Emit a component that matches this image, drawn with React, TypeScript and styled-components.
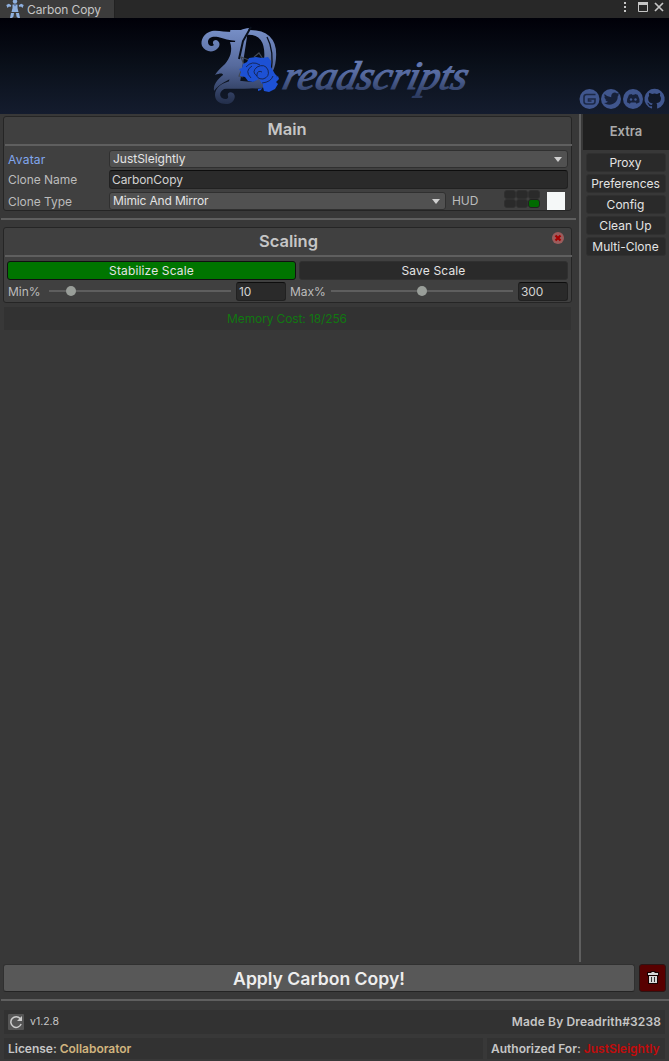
import React from "react";
import styled, { createGlobalStyle } from "styled-components";

const GlobalStyle = createGlobalStyle`
  * { box-sizing: border-box; }
  body {
    margin: 0;
    background: #383838;
    color: #c6c6c6;
    font-family: Inter, "Liberation Sans", sans-serif;
    font-size: 12px;
    line-height: 18px;
    overflow: hidden;
  }
`;

const Window = styled.div`
  width: 669px;
  height: 1061px;
  display: flex;
  flex-direction: column;
  background: #383838;
`;

const TabBar = styled.header`
  height: 18px;
  flex: none;
  display: flex;
  justify-content: space-between;
  background: #282828;
`;

const Tab = styled.div`
  width: 115px;
  height: 18px;
  display: flex;
  gap: 3px;
  padding-left: 6px;
  background: #3c3c3c;
  border-right: 1px solid #222;
  letter-spacing: -0.1px;
  line-height: 20px;
  white-space: nowrap;
`;

const WindowControls = styled.svg`
  width: 54px;
  height: 18px;
`;

const Banner = styled.div`
  height: 96px;
  flex: none;
  background: linear-gradient(#000008, #0a101a 50%, #141c2e);
`;

const Body = styled.div`
  height: 848px;
  flex: none;
  display: flex;
`;

const MainColumn = styled.main`
  width: 579px;
  display: flex;
  flex-direction: column;
`;

const Sidebar = styled.aside`
  flex: 1;
  border-left: 2px solid #5f5f5f;
  padding-left: 2px;
`;

const SidebarTitle = styled.div`
  height: 36px;
  background: #1f1f1f;
  color: #aaa;
  font-size: 13px;
  font-weight: 600;
  line-height: 35px;
  text-align: center;
`;

const SidebarList = styled.div`
  display: flex;
  flex-direction: column;
  gap: 2px;
  padding: 3px 3px 0;
`;

const Button = styled.button<{ $on?: boolean }>`
  height: 19px;
  flex: 1;
  padding: 0;
  border: 1px solid ${(p) => (p.$on ? "#111" : "#303030")};
  border-radius: 3px;
  background: ${(p) => (p.$on ? "#007500" : "#2a2a2a")};
  color: #e4e4e4;
  font: 12px/17px Inter, sans-serif;
  letter-spacing: 0.15px;
  text-align: center;
`;

const StabilizeButton = styled(Button)`
  flex: none;
  width: 289px;
  letter-spacing: 0.15px;
`;

const SideButton = styled(Button)`
  flex: none;
  padding-right: 1px;
  letter-spacing: 0;
  line-height: 18px;
  white-space: nowrap;
`;

const Panel = styled.section<{ $height: number; $top?: number }>`
  width: 569px;
  height: ${(p) => p.$height}px;
  margin: ${(p) => p.$top ?? 2}px 0 0 3px;
  border: 1px solid #252525;
  border-radius: 3px;
  background: #404040;
`;

const PanelTitle = styled.h2<{ $line?: number; $inset?: number }>`
  position: relative;
  height: 29px;
  margin: 0 -1px 0 1px;
  padding-right: ${(p) => p.$inset ?? 3}px;
  border-bottom: 2px solid #5f5f5f;
  font-size: 16.5px;
  font-weight: 600;
  line-height: ${(p) => p.$line ?? 25}px;
  text-align: center;
`;

const CloseBadge = styled.svg`
  position: absolute;
  right: 8px;
  top: 4px;
  width: 12px;
  height: 12px;
`;

const Row = styled.div<{ $top: number; $gap?: number; $left?: number }>`
  height: 18px;
  margin-top: ${(p) => p.$top}px;
  padding: 0 3px 0 ${(p) => p.$left ?? 4}px;
  display: flex;
  gap: ${(p) => p.$gap ?? 0}px;
  align-items: flex-start;
`;

const Label = styled.label<{ $w: number; $active?: boolean; $drop?: number; $indent?: number }>`
  width: ${(p) => p.$w}px;
  flex: none;
  padding-top: ${(p) => p.$drop ?? 1}px;
  padding-left: ${(p) => p.$indent ?? 0}px;
  color: ${(p) => (p.$active ? "#81a7ee" : "#bcbcbc")};
  letter-spacing: ${(p) => (p.$active ? 0.25 : -0.05)}px;
  white-space: nowrap;
`;

const Field = styled.div<{ $w?: number }>`
  ${(p) => (p.$w ? `width: ${p.$w}px;` : "flex: 1;")}
  height: 19px;
  flex-shrink: 0;
  padding-left: 2px;
  border: 1px solid #212121;
  border-top-color: #0d0d0d;
  border-radius: 3px;
  background: #2a2a2a;
  color: #d2d2d2;
  letter-spacing: -0.08px;
  line-height: 18px;
`;

const Select = styled.div<{ $w?: number }>`
  ${(p) => (p.$w ? `width: ${p.$w}px;` : "flex: 1;")}
  height: 18px;
  padding: 0 5px 0 3px;
  display: flex;
  align-items: center;
  justify-content: space-between;
  border: 1px solid #303030;
  border-radius: 3px;
  background: #515151;
  color: #e4e4e4;
  letter-spacing: ${(p) => (p.$w ? -0.16 : -0.02)}px;
  line-height: 16px;
`;

const Caret = styled.i`
  border: 4px solid transparent;
  border-top: 5px solid #d0d0d0;
  border-bottom: 0;
`;

const HudGrid = styled.div`
  width: 36px;
  height: 18px;
  margin: -2px 7px 0 0;
  display: grid;
  grid-template-columns: repeat(3, 12px);
  grid-template-rows: repeat(2, 9px);
`;

const HudCell = styled.i<{ $on?: boolean }>`
  border: 1px solid ${(p) => (p.$on ? "#222" : "#303030")};
  border-radius: 3px;
  background: ${(p) => (p.$on ? "#006b00" : "#2a2a2a")};
`;

const Swatch = styled.div`
  width: 18px;
  height: 18px;
  background: #f5f8f8;
`;

const Divider = styled.hr<{ $top: number; $right?: number }>`
  width: auto;
  height: 2px;
  flex: none;
  margin: ${(p) => p.$top}px ${(p) => p.$right ?? 0}px 0 1px;
  border: 0;
  background: #5f5f5f;
`;

const Slider = styled.div`
  position: relative;
  width: 182px;
  height: 2px;
  flex: none;
  margin: 8px 5px 0 0;
  background: #5e5e5e;
`;

const Thumb = styled.i`
  position: absolute;
  top: -4px;
  width: 10px;
  height: 10px;
  margin-left: -5px;
  border-radius: 50%;
  background: #999e99;
`;

const MemoryBar = styled.div`
  width: 567px;
  height: 23px;
  margin: 4px 0 0 4px;
  padding-right: 1px;
  background: #323232;
  color: #117711;
  line-height: 24px;
  text-align: center;
  letter-spacing: -0.12px;
`;

const ActionRow = styled.div`
  height: 30px;
  flex: none;
  display: flex;
  gap: 4px;
  padding: 2px 3px 0 3px;
`;

const ApplyButton = styled.button`
  flex: 1;
  padding: 1px 0 0;
  border: 1px solid #303030;
  border-bottom-color: #242424;
  border-radius: 3px;
  background: #585858;
  color: #eee;
  font: 600 17.6px/26px Inter, sans-serif;
`;

const TrashButton = styled.button`
  width: 27px;
  padding: 0;
  border: 1px solid #2b1515;
  border-radius: 3px;
  background: #580000;
  line-height: 0;
`;

const FooterRow = styled.div<{ $top: number }>`
  display: flex;
  gap: 4px;
  margin: ${(p) => p.$top}px 4px 0;
`;

const FooterBox = styled.div<{ $w: number; $h: number }>`
  width: ${(p) => p.$w}px;
  height: ${(p) => p.$h}px;
  display: flex;
  align-items: center;
  justify-content: space-between;
  padding: 0 4px;
  background: #323232;
  font-size: 12px;
  font-weight: 600;
  white-space: pre;
`;

const Credit = styled.span`
  letter-spacing: 0.14px;
`;

const License = styled.span`
  letter-spacing: -0.02px;
`;

const Version = styled.span`
  display: flex;
  align-items: center;
  gap: 6px;
  font-size: 10.5px;
  font-weight: 400;
`;

const Tint = styled.span<{ $color: string }>`
  color: ${(p) => p.$color};
`;

const AvatarIcon = () => (
  <svg width="18" height="18" viewBox="0 0 18 18" fill="#8fb0df">
    <circle cx="9" cy="1.600" r="2.200" />
    <path d="M6.500 4.500h5V8l1 4h-7l1-4z" />
    <path d="M.3 5 2.800 3.800l2.500 1.400L4.500 7 3 6.500 1.500 8zM17.700 5l-2.500-1.200-2.500 1.400.8 1.800 1.500-.5L16.500 8zM5 13h3l-.5 3.500L6 18H4zM10 13h3l1 5h-2l-1.500-1.500z" />
    <path d="M7.500 4.500h3L9 6.500z" fill="#5273a8" />
  </svg>
);

const Logo = () => (
  <svg width="669" height="96" viewBox="0 18 669 96">
    <defs>
      <linearGradient id="ink" gradientUnits="userSpaceOnUse" x1="0" y1="28" x2="0" y2="106">
        <stop offset="0" stopColor="#7890c8" />
        <stop offset=".48" stopColor="#566a9d" />
        <stop offset="1" stopColor="#202b45" />
      </linearGradient>
      <linearGradient id="script" gradientUnits="userSpaceOnUse" x1="0" y1="-30" x2="0" y2="12">
        <stop offset="0" stopColor="#6a7fb8" />
        <stop offset=".4" stopColor="#53679c" />
        <stop offset=".75" stopColor="#36466f" />
        <stop offset="1" stopColor="#28365a" />
      </linearGradient>
    </defs>
    <text x="222" y="88" fontFamily="Liberation Serif, serif" fontStyle="italic" fontWeight="700" fontSize="88" textLength="56" lengthAdjust="spacingAndGlyphs" fill="url(#ink)">D</text>
    <g fill="url(#ink)">
      <path d="M249 28c-6 0-10 4-17 4-8 0-14-2-20-1-8 2-12 9-10 15 3 6 11 7 15 3 4-3 3-8-1-9-3 0-4 3-2 5-2 2-6 1-6-3 0-5 5-6 10-5 8 2 15 5 22 3 5-2 8-7 9-12z" />
      <path d="M230 42c3 9 0 16-5 22-4 4-8 7-10 11 5-2 8-2 8 0-5 4-10 9-9 16 5-7 14-11 20-14l6-35z" />
      <path d="M262 83c-9 0-19-3-30-2-10 1-17 7-17 14 0 6 5 9 11 9 8 0 11-8 7-11-3-2-6 0-5 3 1 3-3 4-6 2-4-3-1-9 5-10 13-3 31 4 39-2z" />
    </g>
    <g fill="none" stroke="#0a101c">
      <path d="M267 37c5 9 6 23 4 36" strokeWidth="1.300" />
      <path d="m251 27-8 14-4 18" strokeWidth="2" />
    </g>
    <g fill="none" stroke="#414855" strokeWidth="1.200">
      <path d="m244 65-3-8 8 3M254 57l5-4 4 6M241 71l-2 5 4 1" />
    </g>
    <g fill="#1d51d5">
      <path d="m243 64 4-2 2-4 7-1 6 1 6-1 3 4v6l4 7 2 2-2 6-6 3-7-1-3-5-6 3-5-1-3-4-5-1 1-4-2-3 3-1z" />
      <path d="m263 83 8-2 7-5 1 3-3 3 2 2-3 5-6 3-5-1-1-4zM258 89l4-1-1 2-3 1z" />
    </g>
    <g fill="none" stroke="#15234c" strokeWidth=".9">
      <path d="M246 67q6-7 14-2M251 78q-7-7 1-12M257 76q-6-4 0-9 8-4 11 3 2 7-5 9-7 0-6-5 1-4 5-2M262 83q9-1 11-7" />
    </g>
    <text x="0" y="0" transform="translate(281 88.500) skewX(-14)" fontFamily="Liberation Serif, serif" fontStyle="italic" fontSize="40" textLength="184" lengthAdjust="spacingAndGlyphs" fill="url(#script)" stroke="url(#script)" strokeWidth="1.200">
      readscripts
    </text>
    <g fill="#40568e">
      <circle cx="589.500" cy="99" r="10" />
      <circle cx="611" cy="99" r="10" />
      <circle cx="633" cy="99" r="10" />
    </g>
    <path d="M595.500 94.500h-9q-2.500 0-2.500 2.500v4.500q0 2.500 2.500 2.500h6q2.500 0 2.500-2.500V99h-6.500v2h3" fill="none" stroke="#1c2947" strokeWidth="1.600" />
    <path d="M604.500 94q3 3.300 6.700 3.300-.3-4.300 3.300-4.800 1.700 0 2.500 1l2.100-.8-1.100 2 1.400-.2-1.600 1.600q0 5.500-4.600 7.700-5 2-9.200-.8 2.500 0 4-1.200-2.200-.3-2.900-2.200h1.500q-2.200-.8-2.400-3.100l1.300.3q-1.800-1.200-1-2.800z" fill="#17213a" />
    <path d="m629 94.800 2.500-.8.600.8h2.300l.6-.8 2.600.8q2.300 4 2 7.500l-3.100 1.500-.9-1.200h-4.800l-.9 1.200-3-1.500q-.1-3.500 2.100-7.500z" fill="#17213a" />
    <g fill="#40568e"><circle cx="631" cy="99.500" r="1.200" /><circle cx="635.500" cy="99.500" r="1.200" /></g>
    <path transform="translate(644.500 88.500) scale(.84)" fill="#40568e" d="M12 .3a12 12 0 0 0-3.800 23.400c.6.100.8-.3.800-.6v-2c-3.300.7-4-1.600-4-1.600-.6-1.400-1.400-1.800-1.400-1.800-1-.7.1-.7.1-.7 1.200 0 1.900 1.200 1.900 1.200 1 1.800 2.800 1.300 3.500 1 0-.8.400-1.300.7-1.600-2.700-.3-5.500-1.300-5.500-6 0-1.200.5-2.300 1.300-3.100-.2-.4-.6-1.600 0-3.200 0 0 1-.3 3.400 1.200a11.500 11.500 0 0 1 6 0c2.300-1.500 3.300-1.200 3.300-1.200.6 1.600.2 2.800 0 3.200.9.800 1.300 1.900 1.300 3.200 0 4.600-2.800 5.600-5.500 5.900.5.400.9 1 .9 2.200v3.300c0 .3.100.7.800.6A12 12 0 0 0 12 .3" />
  </svg>
);

const sideItems = ["Proxy", "Preferences", "Config", "Clean Up", "Multi-Clone"];

export default function App() {
  return (
    <Window>
      <GlobalStyle />
      <TabBar>
        <Tab><AvatarIcon /><span>Carbon Copy</span></Tab>
        <WindowControls viewBox="615 0 54 18">
          <g fill="#c6c6c6"><rect x="624" y="2" width="2" height="2" /><rect x="624" y="6" width="2" height="2" /><rect x="624" y="10" width="2" height="2" /></g>
          <path d="M638.500 3v8.500h9V3M638 3.500h10" fill="none" stroke="#c6c6c6" />
          <path d="M638 2h10v3h-10z" fill="#c6c6c6" />
          <path d="m655 3 8 8m0-8-8 8" stroke="#c6c6c6" strokeWidth="1.700" />
        </WindowControls>
      </TabBar>
      <Banner><Logo /></Banner>
      <Body>
        <MainColumn>
          <Panel $height={95}>
            <PanelTitle>Main</PanelTitle>
            <Row $top={4}>
              <Label $w={101} $active>Avatar</Label>
              <Select>JustSleightly<Caret /></Select>
            </Row>
            <Row $top={2}>
              <Label $w={101}>Clone Name</Label>
              <Field>CarbonCopy</Field>
            </Row>
            <Row $top={4}>
              <Label $w={101}>Clone Type</Label>
              <Select $w={337}>Mimic And Mirror<Caret /></Select>
              <Label $w={58} $drop={0} $indent={6}>HUD</Label>
              <HudGrid>
                {[0, 1, 2, 3, 4, 5].map((n) => <HudCell key={n} $on={n === 5} />)}
              </HudGrid>
              <Swatch />
            </Row>
          </Panel>
          <Divider $top={7} $right={3} />
          <Panel $height={76} $top={7}>
            <PanelTitle $line={27} $inset={0}>Scaling
              <CloseBadge viewBox="0 0 12 12">
                <circle cx="6" cy="6" r="6" fill="#9c5c5c" />
                <path d="m3.500 3.500 5 5m0-5-5 5" stroke="#a50000" strokeWidth="2.200" />
              </CloseBadge>
            </PanelTitle>
            <Row $top={4} $gap={3} $left={3}>
              <StabilizeButton $on>Stabilize Scale</StabilizeButton>
              <Button>Save Scale</Button>
            </Row>
            <Row $top={3}>
              <Label $w={41}>Min%</Label>
              <Slider><Thumb style={{ left: "12%" }} /></Slider>
              <Field $w={50}>10</Field>
              <Label $w={45} $indent={4}>Max%</Label>
              <Slider><Thumb style={{ left: "50%" }} /></Slider>
              <Field>300</Field>
            </Row>
          </Panel>
          <MemoryBar>Memory Cost: 18/256</MemoryBar>
        </MainColumn>
        <Sidebar>
          <SidebarTitle>Extra</SidebarTitle>
          <SidebarList>
            {sideItems.map((item) => <SideButton key={item}>{item}</SideButton>)}
          </SidebarList>
        </Sidebar>
      </Body>
      <ActionRow>
        <ApplyButton>Apply Carbon Copy!</ApplyButton>
        <TrashButton>
          <svg width="12" height="14" viewBox="0 0 12 14">
            <path d="M3.500 0h5v1H12v4h-1v8H1V5H0V1h3.500z" fill="#180000" />
            <path d="M4.500 1h3v1H11v2H1V2h3.500zM2 5h8v7H2z" fill="#d7d7d7" />
            <path d="M4.500 6v5m3-5v5" stroke="#333" />
          </svg>
        </TrashButton>
      </ActionRow>
      <Divider $top={7} />
      <FooterRow $top={9}>
        <FooterBox $w={661} $h={24}>
          <Version>
            <svg width="16" height="16" viewBox="0 0 16 16">
              <rect width="16" height="16" rx="1" fill="#555" />
              <path d="M12.300 4.800a5.300 5.300 0 1 0 .8 5.200" fill="none" stroke="#ccc" strokeWidth="1.500" />
              <path d="M14 2v5H9z" fill="#ccc" />
            </svg>
            v1.2.8
          </Version>
          <Credit>Made By Dreadrith#3238</Credit>
        </FooterBox>
      </FooterRow>
      <FooterRow $top={4}>
        <FooterBox $w={479} $h={21}>
          <License>License: <Tint $color="#d0b47e">Collaborator</Tint></License>
        </FooterBox>
        <FooterBox $w={178} $h={21}>
          <span>Authorized For: <Tint $color="#c20b0b">JustSleightly</Tint></span>
        </FooterBox>
      </FooterRow>
    </Window>
  );
}
